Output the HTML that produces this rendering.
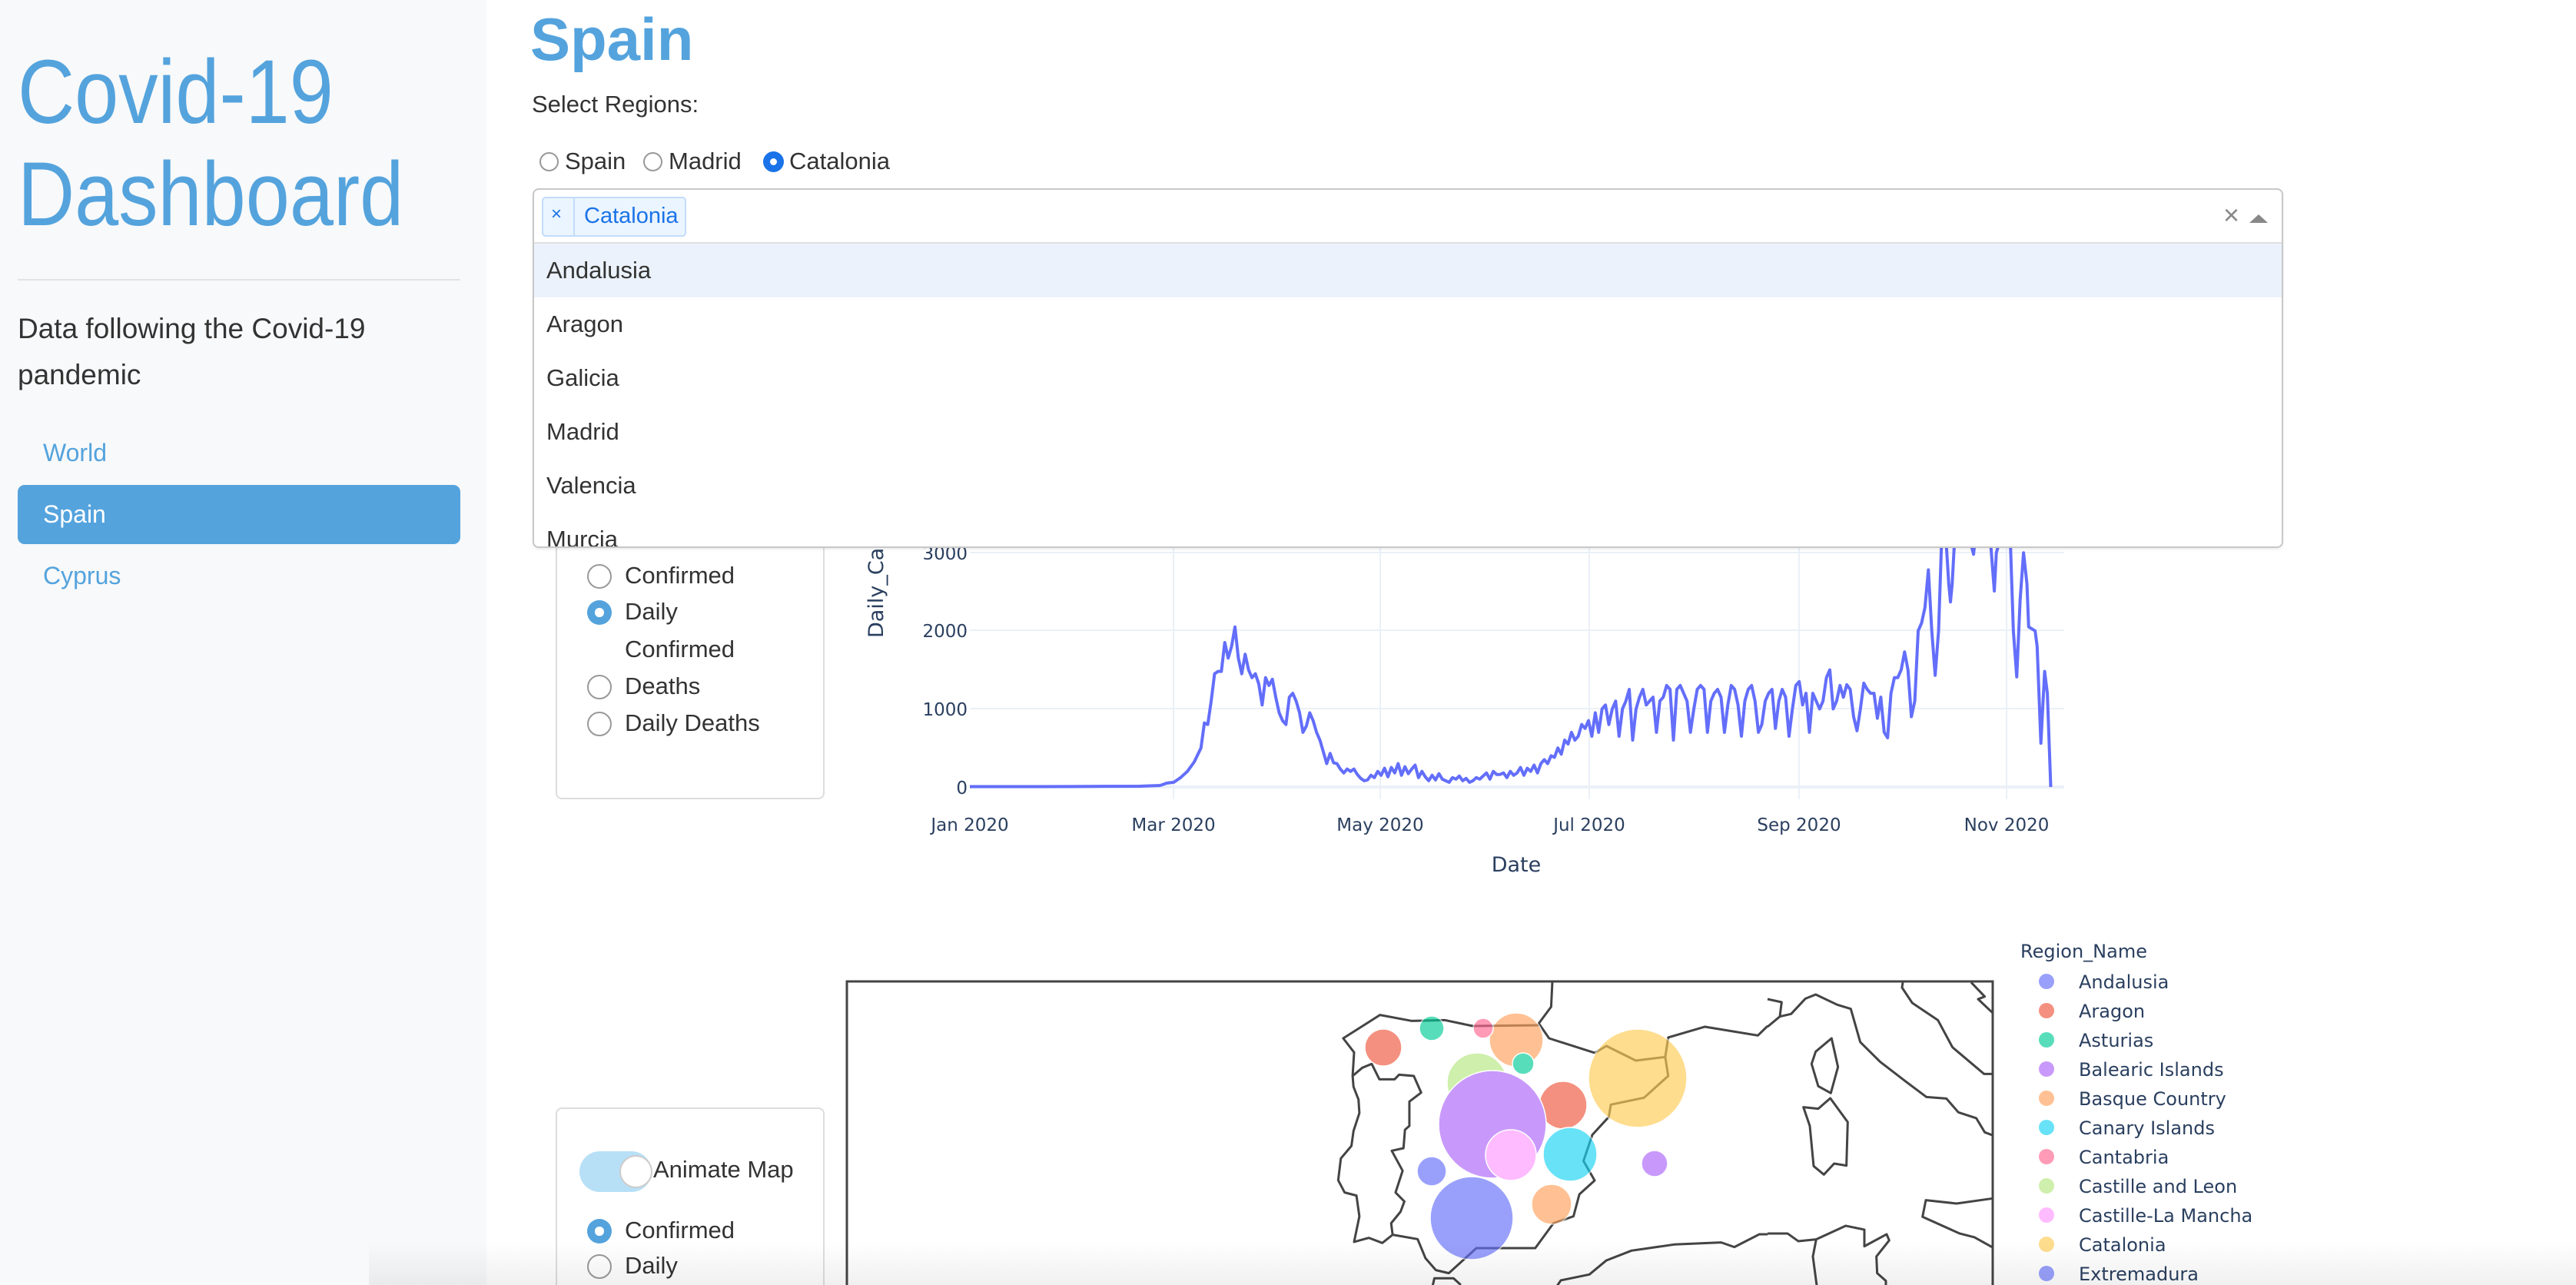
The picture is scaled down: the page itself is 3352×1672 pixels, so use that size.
<!DOCTYPE html>
<html><head><meta charset="utf-8">
<style>
*{box-sizing:border-box;margin:0;padding:0}
html{width:3352px;height:1672px;overflow:hidden}
body{width:3352px;height:1672px;overflow:hidden;background:#fff;font-family:"Liberation Sans",Arial,sans-serif;color:#333;position:relative}
.abs{position:absolute}
#side{left:0;top:0;width:633px;height:1672px;background:#f8f9fa}
.title{left:23px;color:#54a3dd;font-size:118px;line-height:133px;font-weight:300;top:54px;transform:scaleX(0.87);transform-origin:left top;white-space:nowrap}
.hr{left:23px;top:363px;width:576px;height:2px;background:#e1e3e5}
.lead{left:23px;top:398px;font-size:37px;line-height:60px;color:#333;font-weight:300}
.nav{font-size:32px;color:#54a3dd}
.btn{left:23px;top:631px;width:576px;height:77px;background:#54a3dd;border-radius:9px;color:#fff;font-size:32px;padding-left:33px;line-height:77px}
h1{position:absolute;left:690px;top:6px;font-size:78px;color:#54a3dd;font-weight:bold}
.t31{font-size:31px;color:#333}
.rad{position:absolute;border-radius:50%;border:2px solid #999;background:#fff}
.rsel{position:absolute;border-radius:50%;background:#54a3dd}
.rsel::after{content:"";position:absolute;left:50%;top:50%;width:36%;height:36%;margin:-18% 0 0 -18%;border-radius:50%;background:#fff}
.box{position:absolute;border:2px solid #ddd;border-radius:8px;background:#fff}
.dd{left:693px;top:245px;width:2278px;height:468px;border:2px solid #c8c8c8;border-radius:8px;background:#fff;overflow:hidden;z-index:5;box-shadow:0 2px 3px rgba(0,0,0,.08)}
.item{position:absolute;left:0;width:100%;height:70px;font-size:31px;color:#333;padding-left:16px;line-height:70px}
.tk{font-family:"DejaVu Sans",sans-serif;font-size:23px;fill:#2a3f5f}
.leg{font-family:"DejaVu Sans",sans-serif;font-size:24px;fill:#2a3f5f}
</style></head><body>
<div id="side" class="abs"></div>
<div class="abs title">Covid-19<br>Dashboard</div>
<div class="abs hr"></div>
<div class="abs lead">Data following the Covid-19<br>pandemic</div>
<div class="abs nav" style="left:56px;top:571px">World</div>
<div class="abs btn">Spain</div>
<div class="abs nav" style="left:56px;top:731px">Cyprus</div>

<h1>Spain</h1>
<div class="abs t31" style="left:692px;top:118px">Select Regions:</div>
<div class="rad" style="left:702px;top:198px;width:25px;height:25px;border-width:2px"></div>
<div class="abs t31" style="left:735px;top:192px">Spain</div>
<div class="rad" style="left:837px;top:198px;width:25px;height:25px"></div>
<div class="abs t31" style="left:870px;top:192px">Madrid</div>
<div class="rsel" style="left:993px;top:197px;width:27px;height:27px;background:#1a73e8"></div>
<div class="abs t31" style="left:1027px;top:192px">Catalonia</div>

<div class="box" style="left:723px;top:640px;width:350px;height:400px"></div>
<div class="rad" style="left:764px;top:734px;width:32px;height:32px"></div>
<div class="abs t31" style="left:813px;top:731px">Confirmed</div>
<div class="rsel" style="left:764px;top:781px;width:32px;height:32px"></div>
<div class="abs t31" style="left:813px;top:778px">Daily</div>
<div class="abs t31" style="left:813px;top:827px">Confirmed</div>
<div class="rad" style="left:764px;top:878px;width:32px;height:32px"></div>
<div class="abs t31" style="left:813px;top:875px">Deaths</div>
<div class="rad" style="left:764px;top:926px;width:32px;height:32px"></div>
<div class="abs t31" style="left:813px;top:923px">Daily Deaths</div>

<div class="box" style="left:723px;top:1441px;width:350px;height:240px;border-bottom:none;border-radius:8px 8px 0 0"></div>
<div class="abs" style="left:754px;top:1498px;width:94px;height:53px;border-radius:27px;background:#b7e0f7"></div>
<div class="abs" style="left:806px;top:1503px;width:43px;height:43px;border-radius:50%;background:#fff;border:2px solid #ccc"></div>
<div class="abs t31" style="left:850px;top:1504px">Animate Map</div>
<div class="rsel" style="left:764px;top:1586px;width:32px;height:32px"></div>
<div class="abs t31" style="left:813px;top:1583px">Confirmed</div>
<div class="rad" style="left:764px;top:1632px;width:32px;height:32px"></div>
<div class="abs t31" style="left:813px;top:1629px">Daily</div>

<svg class="abs" style="left:0;top:0" width="3352" height="1672">
<defs><clipPath id="cp"><rect x="1262" y="690" width="1430" height="340"/></clipPath></defs>
<g stroke="#ebf0f8" stroke-width="2">
<line x1="1527" y1="700" x2="1527" y2="1040"/><line x1="1796" y1="700" x2="1796" y2="1040"/><line x1="2068" y1="700" x2="2068" y2="1040"/><line x1="2341" y1="700" x2="2341" y2="1040"/><line x1="2611" y1="700" x2="2611" y2="1040"/>
<line x1="1262" y1="719" x2="2686" y2="719"/><line x1="1262" y1="820" x2="2686" y2="820"/><line x1="1262" y1="922" x2="2686" y2="922"/>
<line x1="1262" y1="1024" x2="2686" y2="1024" stroke-width="4"/>
</g>
<g clip-path="url(#cp)">
<polyline fill="none" stroke="#636efa" stroke-width="4" stroke-linejoin="round" vector-effect="non-scaling-stroke" transform="translate(1262,1024) scale(4.423,-0.1016)" points="0,5 20,5 40,8 50,10 56,20 58,50 60,60 62,120 64,200 66,320 68,500 69,820 70,800 71,1100 72,1450 73,1480 74,1480 75,1850 76,1650 77,1800 78,2050 79,1650 80,1450 81,1700 82,1500 83,1400 84,1450 85,1320 86,1050 87,1400 88,1300 89,1380 90,1150 91,950 92,850 93,800 94,1150 95,1200 96,1100 97,950 98,700 99,780 100,950 101,850 102,700 103,600 104,450 105,300 106,430 107,310 108,300 109,230 110,180 111,230 112,200 113,230 114,160 115,110 116,80 117,90 118,150 119,120 120,200 121,150 122,240 123,130 124,250 125,180 126,300 127,150 128,260 129,170 130,230 131,280 132,120 133,200 134,130 135,80 136,150 137,90 138,170 139,100 140,80 141,60 142,120 143,100 144,140 145,80 146,110 147,60 148,80 149,120 150,100 151,140 152,180 153,100 154,200 155,160 156,160 157,180 158,120 159,200 160,150 161,180 162,250 163,150 164,240 165,200 166,280 167,180 168,300 169,350 170,300 171,400 172,380 173,500 174,420 175,600 176,550 177,700 178,600 179,650 180,800 181,750 182,850 183,650 184,950 185,700 186,1000 187,1050 188,800 189,1000 190,1100 191,650 192,1000 193,1100 194,1250 195,600 196,1000 197,1150 198,1250 199,1050 200,1100 201,1150 202,700 203,1100 204,1150 205,1300 206,1250 207,600 208,1250 209,1300 210,1200 211,1100 212,700 213,1000 214,1250 215,1300 216,1250 217,700 218,1100 219,1200 220,1250 221,1150 222,700 223,1050 224,1300 225,1250 226,1050 227,650 228,1100 229,1250 230,1300 231,1100 232,700 233,800 234,1100 235,1200 236,1250 237,750 238,1100 239,1250 240,1150 241,650 242,1000 243,1300 244,1350 245,1050 246,1200 247,700 248,1200 249,1100 250,1000 251,1100 252,1400 253,1500 254,1000 255,1100 256,1300 257,1150 258,1310 259,1250 260,900 261,720 262,1000 263,1330 264,1250 265,1200 266,1200 267,880 268,1150 269,700 270,630 271,1200 272,1400 273,1400 274,1500 275,1730 276,1500 277,900 278,1100 279,2000 280,2100 281,2300 282,2780 283,2000 284,1430 285,2000 286,3300 287,3300 288,2600 288.5,2370 289,2600 290,3400 292,3400 294,3200 295.3,2980 296,3300 300,3300 301.4,2510 302,3000 304,3300 306,3300 307,2000 308,1410 309,2400 310,3000 311,2600 311.5,2050 313.4,2000 314,1800 315.1,560 316.2,1480 317,1200 318,0"/>
</g>
<text class="tk" text-anchor="end" x="1259" y="728">3000</text>
<text class="tk" text-anchor="end" x="1259" y="829">2000</text>
<text class="tk" text-anchor="end" x="1259" y="931">1000</text>
<text class="tk" text-anchor="end" x="1259" y="1033">0</text>
<g class="tk" text-anchor="middle">
<text x="1262" y="1081">Jan 2020</text><text x="1527" y="1081">Mar 2020</text><text x="1796" y="1081">May 2020</text><text x="2068" y="1081">Jul 2020</text><text x="2341" y="1081">Sep 2020</text><text x="2611" y="1081">Nov 2020</text>
</g>
<text class="tk" style="font-size:27px" text-anchor="middle" x="1973" y="1134">Date</text>
<text class="tk" style="font-size:27px" transform="translate(1149,830) rotate(-90)">Daily_Cases</text>

<path d="M1102,1680 L1102,1277 L2593,1277 L2593,1680" fill="#fff" stroke="#444" stroke-width="3"/>
<g fill="none" stroke="#444" stroke-width="3" stroke-linejoin="round">
<g transform="translate(1700,1270) scale(0.3827,0.3333)">
<path vector-effect="non-scaling-stroke" d="M836,25 L832,120 790,185 825,243 980,300 1020,273 1120,330 1220,316 1230,240 1355,198 1535,232 1568,195"/>
<path vector-effect="non-scaling-stroke" d="M790,192 L565,195 470,172 357,175 250,152 125,243 162,298 157,390 160,432 177,482 180,535 160,605 153,663 117,712 108,797 130,845 170,857 180,938 162,1038 212,1022 258,1042 293,1010 378,1027 405,1102 440,1148 484,1160 578,1062 778,1062 840,965 908,938 928,852 980,798 942,722 972,620 1028,550 1035,502 1148,475 1230,390 1220,316"/>
<path vector-effect="non-scaling-stroke" d="M157,390 L190,358 222,343 248,403 300,403 315,385 365,390 390,455 350,490 350,585 335,600 330,672 290,682 327,760 303,845 333,880 320,920 288,965 293,1010"/>
<path vector-effect="non-scaling-stroke" d="M425,1230 L435,1180 500,1180 525,1206 M840,1230 L865,1188 962,1165 1020,1110 1105,1072 1250,1048 1410,1040 1455,1058 1540,1008 1568,1008"/>
</g>
<g transform="translate(2300,1270) scale(0.3333)">
<path vector-effect="non-scaling-stroke" d="M0,90 L55,102 48,158 0,198 M48,158 L92,148 148,88 188,72 272,112 325,128 362,258 440,335 540,412 620,472 698,478 745,532 815,555 848,610 880,622"/>
<path vector-effect="non-scaling-stroke" d="M250,243 L188,295 172,343 198,430 247,457 275,355 Z"/>
<path vector-effect="non-scaling-stroke" d="M245,477 L198,518 140,512 165,585 180,742 220,775 260,732 308,740 313,570 Z"/>
<path vector-effect="non-scaling-stroke" d="M528,25 L525,45 565,105 665,172 722,278 845,382 880,382 M795,25 L848,80 822,90 880,145"/>
<path vector-effect="non-scaling-stroke" d="M880,868 L738,888 618,875 605,940 750,1005 808,1020 880,1060"/>
<path vector-effect="non-scaling-stroke" d="M0,1005 L78,1005 120,1035 190,1028 305,975 378,990 378,1055 465,1008 475,1032 425,1095 428,1160 462,1190 462,1230 M190,1028 L177,1095 195,1230"/>
</g>
</g>
<g stroke="#fff" stroke-width="1.5" opacity="0.65">
<circle cx="1800" cy="1363" r="24" fill="#EF553B"/>
<circle cx="1863" cy="1338" r="16" fill="#00cc96"/>
<circle cx="1922" cy="1409" r="39" fill="#B6E880"/>
<circle cx="1973" cy="1353" r="35" fill="#FFA15A"/>
<circle cx="1930" cy="1338" r="13" fill="#FF6692"/>
<circle cx="1982" cy="1384" r="14" fill="#00cc96"/>
<circle cx="2034" cy="1438" r="31" fill="#EF553B"/>
<circle cx="2131" cy="1403" r="64" fill="#FECB52"/>
<circle cx="1942" cy="1463" r="70" fill="#ab63fa"/>
<circle cx="1966" cy="1503" r="33" fill="#FF97FF"/>
<circle cx="2043" cy="1502" r="35" fill="#19d3f3"/>
<circle cx="2153" cy="1514" r="17" fill="#ab63fa"/>
<circle cx="1863" cy="1524" r="19" fill="#636efa"/>
<circle cx="1915" cy="1585" r="54" fill="#636efa"/>
<circle cx="2019" cy="1567" r="26" fill="#FFA15A"/>
</g>
<text class="leg" x="2629" y="1246">Region_Name</text>
<g opacity="0.65">
<circle cx="2663" cy="1277" r="10" fill="#636efa"/><circle cx="2663" cy="1315" r="10" fill="#EF553B"/><circle cx="2663" cy="1353" r="10" fill="#00cc96"/><circle cx="2663" cy="1391" r="10" fill="#ab63fa"/><circle cx="2663" cy="1429" r="10" fill="#FFA15A"/><circle cx="2663" cy="1467" r="10" fill="#19d3f3"/><circle cx="2663" cy="1505" r="10" fill="#FF6692"/><circle cx="2663" cy="1543" r="10" fill="#B6E880"/><circle cx="2663" cy="1581" r="10" fill="#FF97FF"/><circle cx="2663" cy="1619" r="10" fill="#FECB52"/><circle cx="2663" cy="1657" r="10" fill="#636efa"/>
</g>
<g class="leg">
<text x="2705" y="1286">Andalusia</text><text x="2705" y="1324">Aragon</text><text x="2705" y="1362">Asturias</text><text x="2705" y="1400">Balearic Islands</text><text x="2705" y="1438">Basque Country</text><text x="2705" y="1476">Canary Islands</text><text x="2705" y="1514">Cantabria</text><text x="2705" y="1552">Castille and Leon</text><text x="2705" y="1590">Castille-La Mancha</text><text x="2705" y="1628">Catalonia</text><text x="2705" y="1666">Extremadura</text>
</g>
</svg>

<div class="abs dd">
  <div class="abs" style="left:10px;top:9px;width:188px;height:52px;border:2px solid #c2dcfb;border-radius:5px;background:#ebf5ff"></div>
  <div class="abs" style="left:51px;top:11px;width:2px;height:48px;background:#c2dcfb"></div>
  <div class="abs" style="left:22px;top:18px;font-size:24px;color:#1a73e8">×</div>
  <div class="abs" style="left:65px;top:18px;font-size:29px;color:#1a73e8">Catalonia</div>
  <div class="abs" style="left:2198px;top:12px;font-size:36px;color:#888">×</div>
  <div class="abs" style="left:2232px;top:32px;width:0;height:0;border-left:12px solid transparent;border-right:12px solid transparent;border-bottom:11px solid #888"></div>
  <div class="abs" style="left:0;top:68px;width:100%;height:2px;background:#e0e0e0"></div>
  <div class="item" style="top:70px;background:#ebf2fc">Andalusia</div>
  <div class="item" style="top:140px">Aragon</div>
  <div class="item" style="top:210px">Galicia</div>
  <div class="item" style="top:280px">Madrid</div>
  <div class="item" style="top:350px">Valencia</div>
  <div class="item" style="top:420px">Murcia</div>
</div>
<div class="abs" style="left:480px;top:1615px;width:2872px;height:57px;background:linear-gradient(to bottom,rgba(0,0,0,0),rgba(0,0,0,0.06));z-index:6"></div>
</body></html>
